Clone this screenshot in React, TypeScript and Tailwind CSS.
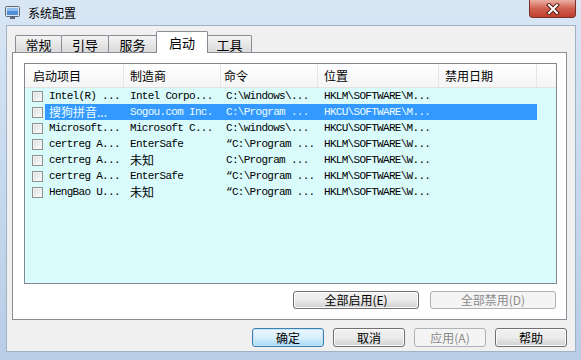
import React from 'react'

type Row = { name: string; maker: string; cmd: string; loc: string; cjkName?: boolean; cjkMaker?: boolean; selected?: boolean }

const rows: Row[] = [
  { name: 'Intel(R) ...', maker: 'Intel Corpo...', cmd: 'C:\\Windows\\...', loc: 'HKLM\\SOFTWARE\\M...' },
  { name: '搜狗拼音...', maker: 'Sogou.com Inc.', cmd: 'C:\\Program ...', loc: 'HKCU\\SOFTWARE\\M...', cjkName: true, selected: true },
  { name: 'Microsoft...', maker: 'Microsoft C...', cmd: 'C:\\windows\\...', loc: 'HKCU\\SOFTWARE\\M...' },
  { name: 'certreg A...', maker: 'EnterSafe', cmd: '“C:\\Program ...', loc: 'HKLM\\SOFTWARE\\W...' },
  { name: 'certreg A...', maker: '未知', cmd: 'C:\\Program ...', loc: 'HKLM\\SOFTWARE\\W...', cjkMaker: true },
  { name: 'certreg A...', maker: 'EnterSafe', cmd: '“C:\\Program ...', loc: 'HKLM\\SOFTWARE\\W...' },
  { name: 'HengBao U...', maker: '未知', cmd: '“C:\\Program ...', loc: 'HKLM\\SOFTWARE\\W...', cjkMaker: true },
]

const mono = "font-['Liberation_Mono','Noto_Sans_CJK_SC',monospace] text-[11px] tracking-[-0.7px]"
const cjk = "font-['Noto_Sans_CJK_SC',sans-serif] text-[12px]"

function Tab({ label, w, selected }: { label: string; w: string; selected?: boolean }) {
  if (selected) {
    return (
      <div className={`${w} h-[22px] -ml-px -mb-px relative z-10 bg-white border border-b-0 border-[#898c95] rounded-t-[2px] flex items-center justify-center ${cjk} text-[13px] leading-none text-black`}>
        {label}
      </div>
    )
  }
  return (
    <div className={`${w} h-[17px] -ml-px first:ml-0 bg-gradient-to-b from-[#f4f4f4] to-[#dadada] border border-b-0 border-[#898c95] rounded-t-[2px] flex items-center justify-center ${cjk} text-[13px] leading-none text-black`}>
      {label}
    </div>
  )
}

function Button({ label, w, h, primary, disabled }: { label: string; w: string; h: string; primary?: boolean; disabled?: boolean }) {
  const look = disabled
    ? 'border-[#adb2b5] bg-[#f4f4f4] text-[#8a8a8a]'
    : primary
      ? 'border-[#3c7fb1] bg-gradient-to-b from-[#eaf6fd] via-[#d9f0fc] to-[#a7d9f5] text-black shadow-[inset_0_0_0_1px_#c4e5f6]'
      : 'border-[#707070] bg-gradient-to-b from-[#f2f2f2] via-[#ebebeb] to-[#cfcfcf] text-black shadow-[inset_0_0_0_1px_#fcfcfc]'
  return (
    <div className={`${w} ${h} border rounded-[3px] flex items-center justify-center ${cjk} leading-none ${look}`}>
      {label}
    </div>
  )
}

function Check() {
  return <div className="w-[11px] h-[11px] border border-[#8e8f8f] bg-gradient-to-br from-[#dcdcdc] to-[#fbfbfb] shadow-[inset_0_0_0_1px_#f4f4f4]" />
}

export default function App() {
  return (
    <div className="w-[581px] h-[360px] overflow-hidden bg-gradient-to-b from-[#d9e6f4] via-[#c6d9ee] to-[#b8cde6] flex flex-col relative">
      {/* ── Title bar ── */}
      <div className="h-[25px] flex items-center pl-[5px] gap-[8px]">
        <svg width="15" height="13" viewBox="0 0 15 13">
          <rect x="0.5" y="0.5" width="14" height="10" rx="1" fill="#dfe3e8" stroke="#5f6b7a" />
          <rect x="2" y="2" width="11" height="7" fill="#4f8fd6" />
          <rect x="2" y="2" width="11" height="3" fill="#8cbcef" />
          <rect x="5" y="11" width="5" height="2" fill="#5f6b7a" />
        </svg>
        <span className={`${cjk} leading-none text-black`}>系统配置</span>
      </div>
      <div className="absolute top-0 right-[5px] w-[47px] h-[18px] rounded-b-[4px] border border-t-0 border-[#7a2f28] bg-gradient-to-b from-[#eab0a3] via-[#d0604f] to-[#c23d2c] flex items-center justify-center">
        <svg width="14" height="12" viewBox="0 0 14 12">
          <path d="M3 2 L11 10 M11 2 L3 10" stroke="#5a1d16" strokeWidth="4" strokeLinecap="square" />
          <path d="M3 2 L11 10 M11 2 L3 10" stroke="#ffffff" strokeWidth="2" strokeLinecap="square" />
        </svg>
      </div>

      {/* ── Client area ── */}
      <div className="ml-[6px] w-[570px] h-[327px] bg-[#f0f0f0] border border-[#9fb2c8] flex flex-col">
        {/* tabs */}
        <div className="mt-[5px] pl-[8px] h-[21px] flex items-end">
          <Tab label="常规" w="w-[47px]" />
          <Tab label="引导" w="w-[48px]" />
          <Tab label="服务" w="w-[49px]" />
          <Tab label="启动" w="w-[52px]" selected />
          <Tab label="工具" w="w-[45px]" />
        </div>

        {/* tab panel */}
        <div className="ml-[5px] w-[555px] h-[268px] bg-white border border-[#898c95] flex flex-col">
          <div className="ml-[11px] mt-[10px] w-[533px] h-[221px] border border-[#828790] bg-[#d9fbfc] flex flex-col">
            {/* header */}
            <div className={`h-[24px] flex bg-gradient-to-b from-white to-[#f5f5f5] border-b border-[#e3e3e3] ${cjk} text-black`}>
              <div className="w-[99px] pl-[8px] flex items-center border-r border-[#e3e7ec]">启动项目</div>
              <div className="w-[97px] pl-[6px] flex items-center border-r border-[#e3e7ec]">制造商</div>
              <div className="w-[97px] pl-[3px] flex items-center border-r border-[#e3e7ec]">命令</div>
              <div className="w-[121px] pl-[6px] flex items-center border-r border-[#e3e7ec]">位置</div>
              <div className="w-[98px] pl-[6px] flex items-center border-r border-[#e3e7ec]">禁用日期</div>
              <div className="flex-1" />
            </div>
            {/* rows */}
            {rows.map((r, i) => (
              <div key={i} className="h-[16px] flex items-center">
                <div className="w-[20px] h-full flex items-center pl-[7px]">
                  <Check />
                </div>
                <div className={`w-[492px] h-full flex items-center whitespace-nowrap overflow-hidden ${r.selected ? 'bg-[#3399ff] text-[#eefcff]' : 'text-black'}`}>
                  <div className={`w-[79px] pl-[4px] ${r.cjkName ? `${cjk} leading-none` : mono}`}>{r.name}</div>
                  <div className={`w-[97px] pl-[6px] ${r.cjkMaker ? `${cjk} leading-none` : mono}`}>{r.maker}</div>
                  <div className={`w-[97px] pl-[5px] overflow-hidden ${mono}`}>{r.cmd}</div>
                  <div className={`w-[121px] pl-[6px] ${mono}`}>{r.loc}</div>
                  <div className="w-[98px]" />
                </div>
              </div>
            ))}
          </div>
          <div className="mt-[7px] pr-[10px] flex justify-end gap-[11px]">
            <Button label="全部启用(E)" w="w-[126px]" h="h-[18px]" />
            <Button label="全部禁用(D)" w="w-[126px]" h="h-[18px]" disabled />
          </div>
        </div>

        {/* dialog buttons */}
        <div className="mt-[8px] pr-[8px] flex justify-end gap-[9px]">
          <Button label="确定" w="w-[72px]" h="h-[19px]" primary />
          <Button label="取消" w="w-[72px]" h="h-[19px]" />
          <Button label="应用(A)" w="w-[72px]" h="h-[19px]" disabled />
          <Button label="帮助" w="w-[72px]" h="h-[19px]" />
        </div>
      </div>
    </div>
  )
}
